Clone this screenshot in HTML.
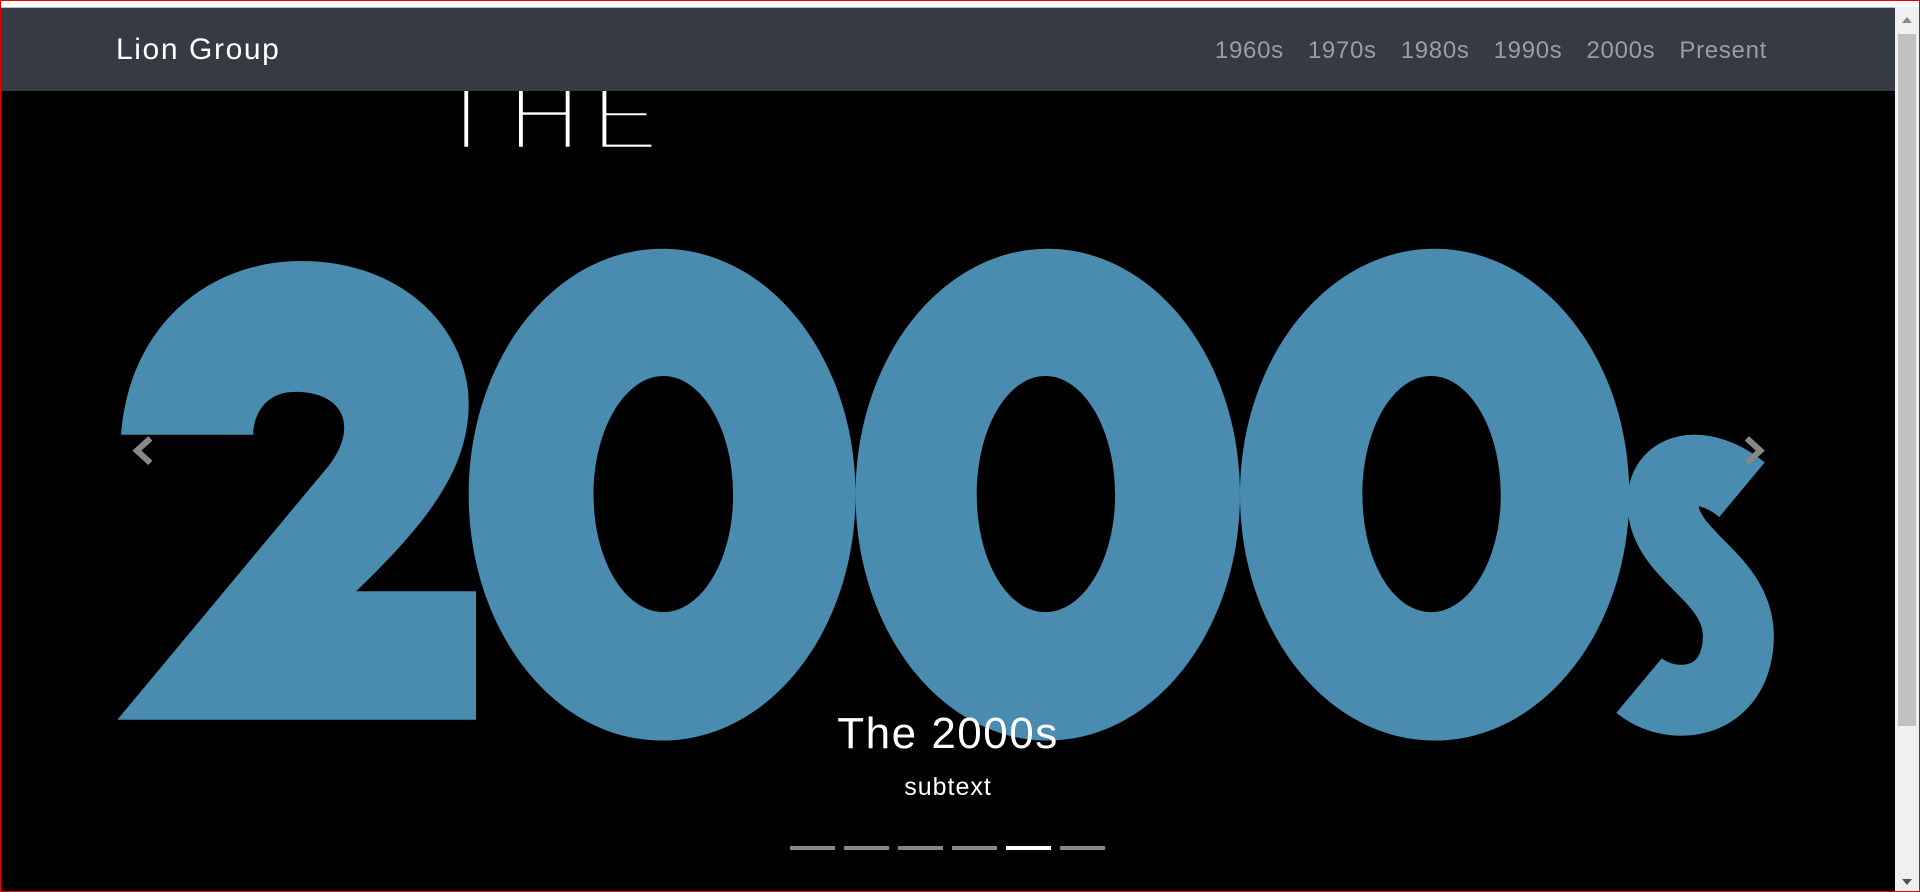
<!DOCTYPE html>
<html><head><meta charset="utf-8"><style>
html,body{margin:0;padding:0;width:1920px;height:892px;overflow:hidden;background:#fff;font-family:"Liberation Sans",sans-serif}
.frame{position:absolute;left:0;top:0;width:1918px;height:890px;border:1px solid #e00;}
.nav{position:absolute;left:1px;top:7px;width:1894px;height:84px;background:#363a42;border-top:1px solid #bbb;box-sizing:border-box}
.brand{position:absolute;left:115px;top:25px;font-size:30px;color:#fff;letter-spacing:1.6px}
.links{position:absolute;right:128px;top:29px;font-size:24px;color:#9a9da2;letter-spacing:0.7px}
.links span{margin-left:24px}
.car{position:absolute;left:1px;top:91px;width:1894px;height:800px;background:#000;overflow:hidden}
.sb{position:absolute;left:1895px;top:7px;width:24px;height:884px;background:#f0f0f0}
.thumb{position:absolute;left:3px;top:27px;width:18px;height:692px;background:#c1c1c1}
.cap{position:absolute;left:0;width:1894px;text-align:center;color:#fff}
.ind{position:absolute;top:755px;left:789px}
.ind i{display:inline-block;width:45px;height:4px;background:#888;margin-right:9px;vertical-align:top}
</style></head><body>
<div class="frame"></div>
<div class="car">
<svg width="1894" height="800" viewBox="0 74 1547 654" preserveAspectRatio="none" style="position:absolute;left:0;top:0">
<text x="355" y="122" fill="#fff" font-size="82" font-family="Liberation Sans" letter-spacing="9" stroke="#000" stroke-width="4.5">THE</text>
<g fill="#4a8bb0">
<path d="M95,588 L268,380 C292,348 280,320 240,320 C215,320 206,340 206,355 L98,355 C105,265 170,213 245,213 C330,213 382,270 382,330 C382,385 345,430 290,483 L388,483 L388,588 Z"/>
<path fill-rule="evenodd" d="M540,203 C628,203 698,293 698,404 C698,515 628,605 540,605 C452,605 382,515 382,404 C382,293 452,203 540,203 Z M541,307 C510,307 484,350 484,404 C484,458 510,500 541,500 C572,500 598,458 598,404 C598,350 572,307 541,307 Z"/>
<path fill-rule="evenodd" d="M855,203 C942,203 1012,293 1012,404 C1012,515 942,605 855,605 C768,605 698,515 698,404 C698,293 768,203 855,203 Z M853,307 C822,307 797,350 797,404 C797,458 822,500 853,500 C884,500 910,458 910,404 C910,350 884,307 853,307 Z"/>
<path fill-rule="evenodd" d="M1171,203 C1259,203 1330,293 1330,404 C1330,515 1259,605 1171,605 C1083,605 1012,515 1012,404 C1012,293 1083,203 1171,203 Z M1168,307 C1137,307 1112,350 1112,404 C1112,458 1137,500 1168,500 C1199,500 1225,458 1225,404 C1225,350 1199,307 1168,307 Z"/>
</g>
<path d="M1422,400 C1392,375 1352,378 1358,418 C1365,460 1428,475 1418,532 C1410,578 1362,580 1338,560" fill="none" stroke="#4a8bb0" stroke-width="58"/>
<path d="M122,358 L111,368 L122,378" fill="none" stroke="#888" stroke-width="5"/>
<path d="M1426,358 L1437,368 L1426,378" fill="none" stroke="#888" stroke-width="5"/>
</svg>
<div class="cap" style="top:618px;font-size:44px;letter-spacing:1.5px">The 2000s</div>
<div class="cap" style="top:682px;font-size:25px;letter-spacing:1px">subtext</div>
<div class="ind"><i></i><i></i><i></i><i></i><i style="background:#fff"></i><i></i></div>
</div>
<div class="nav"><div class="brand">Lion Group</div>
<div class="links">1960s<span>1970s</span><span>1980s</span><span>1990s</span><span>2000s</span><span>Present</span></div></div>
<div class="sb"><div class="thumb"></div>
<div style="position:absolute;left:7px;top:10px;border:5px solid transparent;border-bottom:6px solid #888;border-top:0"></div>
<div style="position:absolute;left:7px;bottom:6px;border:5px solid transparent;border-top:6px solid #555;border-bottom:0"></div></div>
</body></html>
